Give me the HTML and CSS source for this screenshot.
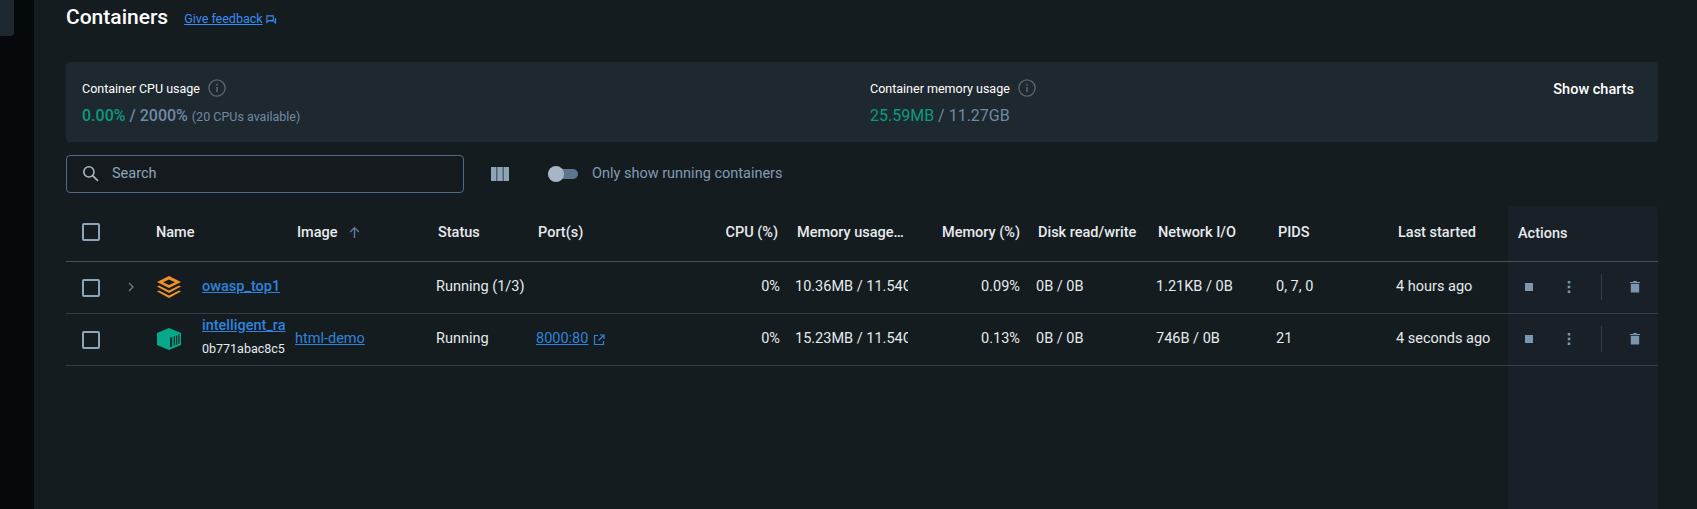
FILE: index.html
```html
<!DOCTYPE html>
<html lang="en">
<head>
    <meta charset="UTF-8">
    <meta name="viewport" content="width=device-width, initial-scale=1.0">
    <title>Containers</title>
    <link rel="stylesheet" href="styles.css">
</head>
<body>
    <aside class="sidebar"><div class="sidebar-item"></div></aside>
    <main class="main">
        <div class="title-row">
            <h1>Containers</h1>
            <a class="feedback" href="#">Give feedback</a>
            <svg class="feedback-icon" viewBox="0 0 12 12"><path d="M1 1h7v5H3L1 8z" fill="none" stroke="currentColor" stroke-width="1.2"/><path d="M4 7.5h4.5L11 10V3.5H9.5V7H4z" fill="currentColor"/></svg>
        </div>

        <section class="stats">
            <div class="stat stat-cpu">
                <div class="stat-label">Container CPU usage
                    <svg class="info" viewBox="0 0 16 16"><circle cx="8" cy="8" r="7.2" fill="none" stroke="currentColor" stroke-width="1.2"/><path d="M7.3 7h1.4v4.6H7.3zM7.3 4.2h1.4v1.5H7.3z" fill="currentColor"/></svg>
                </div>
                <div class="stat-value"><span class="green">0.00%</span> / 2000% <small>(20 CPUs available)</small></div>
            </div>
            <div class="stat stat-mem">
                <div class="stat-label">Container memory usage
                    <svg class="info" viewBox="0 0 16 16"><circle cx="8" cy="8" r="7.2" fill="none" stroke="currentColor" stroke-width="1.2"/><path d="M7.3 7h1.4v4.6H7.3zM7.3 4.2h1.4v1.5H7.3z" fill="currentColor"/></svg>
                </div>
                <div class="stat-value"><span class="green">25.59MB</span> / 11.27GB</div>
            </div>
            <button class="show-charts">Show charts</button>
        </section>

        <div class="toolbar">
            <div class="search">
                <svg class="search-icon" viewBox="0 0 16 16"><circle cx="6.5" cy="6.5" r="4.8" fill="none" stroke="currentColor" stroke-width="1.5"/><path d="M10 10l5 5" stroke="currentColor" stroke-width="1.6"/></svg>
                <span>Search</span>
            </div>
            <svg class="columns-icon" viewBox="0 0 18 14"><path d="M0 0h5.500v14H0zM6.250 0h5.500v14h-5.500zM12.500 0H18v14h-5.500z" fill="currentColor"/></svg>
            <div class="toggle"><span class="toggle-knob"></span></div>
            <span class="toggle-label">Only show running containers</span>
        </div>

        <div class="table">
            <div class="table-main">
                <div class="row head">
                    <div class="cell"><span class="checkbox"></span></div>
                    <div class="cell"></div>
                    <div class="cell head-name">Name</div>
                    <div class="cell">Image
                        <svg class="sort" viewBox="0 0 12 12"><path d="M6 11V2M2 5.500L6 1.500l4 4" fill="none" stroke="currentColor" stroke-width="1.300"/></svg>
                    </div>
                    <div class="cell">Status</div>
                    <div class="cell">Port(s)</div>
                    <div class="cell num head-cpu">CPU (%)</div>
                    <div class="cell">Memory usage…</div>
                    <div class="cell num mem-pct">Memory (%)</div>
                    <div class="cell">Disk read/write</div>
                    <div class="cell">Network I/O</div>
                    <div class="cell">PIDS</div>
                    <div class="cell">Last started</div>
                </div>

                <div class="row">
                    <div class="cell"><span class="checkbox"></span></div>
                    <div class="cell"><svg class="chevron" viewBox="0 0 6 10"><path d="M1 1l4 4-4 4" fill="none" stroke="currentColor" stroke-width="1.300"/></svg></div>
                    <div class="cell name-cell">
                        <svg class="kind-icon" viewBox="0 0 24 22"><path d="M12 0l12 6-12 6L0 6zM12 3.500L6 6.200 12 9l6-2.800z" fill="#f0902a" fill-rule="evenodd"/><path d="M0 10.500l2-1 10 5 10-5 2 1L12 17z" fill="#f0902a"/><path d="M0 15.500l2-1 10 5 10-5 2 1L12 22z" fill="#f0902a"/></svg>
                        <div class="name-text"><a href="#" class="name">owasp_top1</a></div>
                    </div>
                    <div class="cell"></div>
                    <div class="cell">Running (1/3)</div>
                    <div class="cell"></div>
                    <div class="cell num">0%</div>
                    <div class="cell clip">10.36MB / 11.54GB</div>
                    <div class="cell num mem-pct">0.09%</div>
                    <div class="cell">0B / 0B</div>
                    <div class="cell">1.21KB / 0B</div>
                    <div class="cell">0, 7, 0</div>
                    <div class="cell">4 hours ago</div>
                </div>

                <div class="row">
                    <div class="cell"><span class="checkbox"></span></div>
                    <div class="cell"></div>
                    <div class="cell name-cell">
                        <svg class="kind-icon" viewBox="0 0 24 22"><path d="M12 0l12 5v12l-12 5-12-5V5z" fill="#07a98c"/><path d="M13 19.500V9.800l2.200-.8v9.700zM16.700 18V8.500l1.300-.5v9.500zM18.900 17V7.700l1.400-.5v9.300zM21.300 16V6.800l1.300-.5v9.200z" fill="#15302f"/></svg>
                        <div class="name-text name-stack">
                            <a href="#" class="name">intelligent_ra</a>
                            <div class="short-id">0b771abac8c5</div>
                        </div>
                    </div>
                    <div class="cell"><a href="#">html-demo</a></div>
                    <div class="cell">Running</div>
                    <div class="cell"><a href="#">8000:80</a>
                        <svg class="ext" viewBox="0 0 12 12"><path d="M5 1.500H1.500v9h9V7M7 1h4v4M11 1L5.500 6.500" fill="none" stroke="currentColor" stroke-width="1.200"/></svg>
                    </div>
                    <div class="cell num">0%</div>
                    <div class="cell clip">15.23MB / 11.54GB</div>
                    <div class="cell num mem-pct">0.13%</div>
                    <div class="cell">0B / 0B</div>
                    <div class="cell">746B / 0B</div>
                    <div class="cell">21</div>
                    <div class="cell">4 seconds ago</div>
                </div>
            </div>

            <div class="table-actions">
                <div class="action-head">Actions</div>
                <div class="action-row">
                    <span class="stop"></span>
                    <svg class="dots" viewBox="0 0 4 14"><path d="M.5 0h3v3h-3zM.5 5.500h3v3h-3zM.5 11h3v3h-3z" fill="currentColor"/></svg>
                    <span class="action-sep"></span>
                    <svg class="trash" viewBox="0 0 10 12"><path d="M0 1.500h3L3.500.5h3l.5 1h3v1H0zM.800 3.200h8.400V12H.800z" fill="currentColor"/></svg>
                </div>
                <div class="action-row">
                    <span class="stop"></span>
                    <svg class="dots" viewBox="0 0 4 14"><path d="M.5 0h3v3h-3zM.5 5.500h3v3h-3zM.5 11h3v3h-3z" fill="currentColor"/></svg>
                    <span class="action-sep"></span>
                    <svg class="trash" viewBox="0 0 10 12"><path d="M0 1.500h3L3.500.5h3l.5 1h3v1H0zM.800 3.200h8.400V12H.800z" fill="currentColor"/></svg>
                </div>
            </div>
        </div>
    </main>
</body>
</html>
```

FILE: styles.css
```css
* {
    box-sizing: border-box;
}
html, body {
    height: 100%;
}
body {
    margin: 0;
    display: flex;
    overflow: hidden;
    background: #151c20;
    color: #e6eaed;
    font-family: Roboto, "Noto Sans", sans-serif;
    font-size: 14.5px;
}
a {
    color: #2f83dc;
}
.sidebar {
    width: 34px;
    flex: none;
    background: #05090b;
}
.sidebar-item {
    width: 14px;
    height: 36px;
    background: #1e282f;
    border-bottom-right-radius: 4px;
}
.main {
    flex: 1;
    display: flex;
    flex-direction: column;
    min-width: 0;
    padding: 0 39px 0 32px;
}
.title-row {
    height: 62px;
    padding-top: 3px;
    display: flex;
    align-items: flex-start;
    color: #2f83dc;
}
h1 {
    margin: 0;
    font-size: 21px;
    line-height: 28px;
    font-weight: 500;
    color: #fff;
}
.feedback {
    margin: 9px 0 0 16px;
    font-size: 12.5px;
    line-height: 14px;
    color: #3a8cf0;
}
.feedback-icon {
    width: 11px;
    height: 11px;
    margin: 12px 0 0 3px;
    color: #3a8cf0;
}
.stats {
    height: 80px;
    display: flex;
    background: #1e282f;
    border-radius: 4px;
    padding: 17px 24px 0 16px;
}
.stat-cpu {
    width: 788px;
}
.stat-label {
    display: flex;
    align-items: center;
    gap: 8px;
    height: 18px;
    font-size: 12.5px;
    color: #fff;
}
.info {
    width: 18px;
    height: 18px;
    color: #5a666e;
}
.stat-value {
    margin-top: 9px;
    font-size: 16px;
    line-height: 20px;
    font-weight: 500;
    color: #6f8aa6;
}
.stat-value small {
    font-size: 12.5px;
    font-weight: 400;
}
.stat-mem .stat-value {
    font-weight: 400;
}
.green {
    color: #0a9b81;
}
.show-charts {
    margin-left: auto;
    height: 20px;
    padding: 0;
    border: none;
    background: none;
    color: #fff;
    font: 500 14.5px Roboto, sans-serif;
}
.toolbar {
    height: 37px;
    margin-top: 13px;
    display: flex;
    align-items: center;
}
.search {
    width: 398px;
    height: 38px;
    display: flex;
    align-items: center;
    gap: 13px;
    padding-left: 15px;
    border: 1px solid #50698a;
    border-radius: 4px;
    color: #8ea5b9;
    background: #141a1e;
}
.search-icon {
    width: 17px;
    height: 17px;
    color: #aab8c4;
}
.columns-icon {
    width: 18px;
    height: 14px;
    margin-left: 27px;
    color: #8ea5b9;
}
.toggle {
    width: 30px;
    height: 10px;
    margin-left: 39px;
    background: #5c7690;
    border-radius: 5px;
    display: flex;
    align-items: center;
}
.toggle-knob {
    width: 16px;
    height: 16px;
    border-radius: 50%;
    background: #a6b6c4;
}
.toggle-label {
    margin-left: 14px;
    color: #7f9bb4;
}
.table {
    flex: 1;
    display: flex;
    margin-top: 14px;
}
.table-main {
    width: 1442px;
    flex: none;
}
.row {
    display: grid;
    grid-template-columns: 50px 40px 139px 141px 100px 154px 105px 113px 128px 120px 120px 120px 112px;
    height: 52px;
    border-bottom: 1px solid #323e47;
    align-items: center;
}
.row.head {
    height: 56px;
    border-bottom-color: #4a5258;
    font-weight: 500;
    padding-bottom: 3px;
}
.row.head .cell {
    padding-left: 2px;
    padding-bottom: 0;
}
.row.head .cell:first-child {
    padding-left: 16px;
}
.row.head .cell.head-name {
    padding-left: 0;
}
.cell {
    white-space: nowrap;
    display: flex;
    align-items: center;
    min-width: 0;
    padding-bottom: 2px;
}
.cell:first-child {
    padding-left: 16px;
    padding-bottom: 0;
}
.row.head .cell.num {
    padding-left: 0;
}
.cell.num {
    justify-content: flex-end;
    padding-right: 15px;
}
.cell.mem-pct {
    padding-right: 16px;
}
.cell.head-cpu {
    padding-right: 17px;
}
.clip {
    overflow: hidden;
}
.checkbox {
    width: 18px;
    height: 18px;
    border: 2px solid #8ca5b8;
    border-radius: 2px;
}
.chevron {
    width: 6px;
    height: 10px;
    margin-left: 12px;
    color: #6b7f90;
}
.sort {
    width: 13px;
    height: 13px;
    margin-left: 10px;
    color: #5f7c98;
}
.name-cell {
    gap: 20px;
    overflow: hidden;
}
.kind-icon {
    width: 24px;
    height: 22px;
    margin-left: 1px;
    margin-right: 1px;
    flex: none;
}
.name {
    font-weight: 500;
}
.name-text {
    overflow: hidden;
    line-height: 20px;
}
.name-stack {
    margin-bottom: 4px;
}
.short-id {
    margin-top: 5px;
    font-size: 12.5px;
    line-height: 16px;
}
.ext {
    width: 12px;
    height: 12px;
    margin: 2px 0 0 5px;
    color: #2f83dc;
}
.table-actions {
    flex: 1;
    background: #192027;
    border-radius: 4px 4px 0 0;
}
.action-head {
    height: 56px;
    padding: 0 0 1px 10px;
    display: flex;
    align-items: center;
    font-weight: 500;
    border-bottom: 1px solid #4a5258;
}
.action-row {
    height: 52px;
    display: flex;
    align-items: center;
    padding: 0 0 2px 17px;
    border-bottom: 1px solid #323e47;
    color: #7b97b0;
}
.stop {
    width: 8px;
    height: 8px;
    background: #7b97b0;
}
.dots {
    width: 4px;
    height: 12px;
    margin-left: 34px;
}
.action-sep {
    width: 1px;
    height: 26px;
    margin-left: 30px;
    background: #323e47;
}
.trash {
    width: 10px;
    height: 13px;
    margin-left: 28px;
}
```
